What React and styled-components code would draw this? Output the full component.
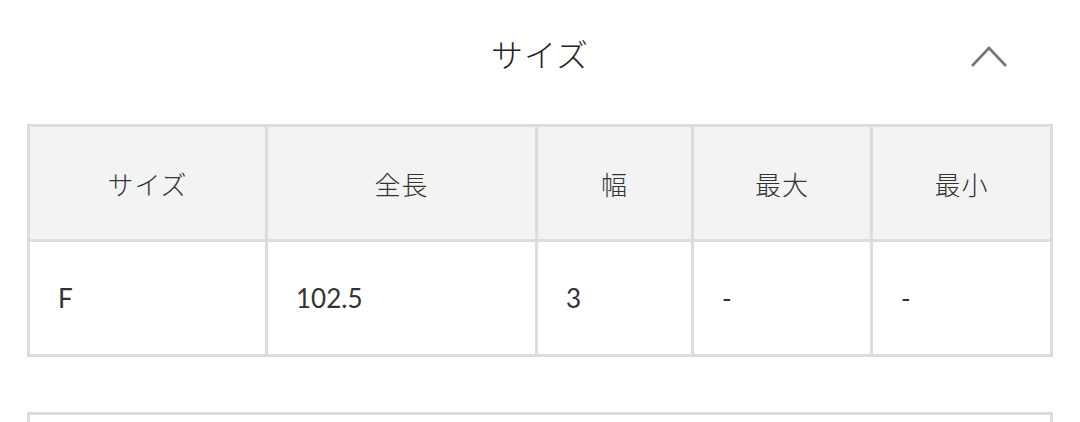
import styled, { createGlobalStyle } from "styled-components";

const GlobalStyle = createGlobalStyle`
    body {
        margin: 0;
        background: #fff;
        font-family: Lato, "Noto Sans CJK JP", sans-serif;
        color: #333;
    }
`;

const columns = [
    { label: "サイズ", width: 238 },
    { label: "全長", width: 270 },
    { label: "幅", width: 156 },
    { label: "最大", width: 179 },
    { label: "最小", width: 180 },
];

const rows = [["F", "102.5", "3", "-", "-"]];

const App = () => {
    return (
        <>
            <GlobalStyle />
            <Page>
                <Header>
                    <span />
                    <Title>サイズ</Title>
                    <Toggle aria-label="閉じる">
                        <svg width="38" height="24" viewBox="0 0 38 24">
                            <polyline
                                points="2,21 19,3 36,21"
                                fill="none"
                                stroke="#777"
                                strokeWidth="2.6"
                            />
                        </svg>
                    </Toggle>
                </Header>
                <Table>
                    <colgroup>
                        {columns.map((c) => (
                            <col key={c.label} style={{ width: c.width }} />
                        ))}
                    </colgroup>
                    <thead>
                        <tr>
                            {columns.map((c) => (
                                <HeadCell key={c.label}>{c.label}</HeadCell>
                            ))}
                        </tr>
                    </thead>
                    <tbody>
                        {rows.map((r, i) => (
                            <tr key={i}>
                                {r.map((v, j) => (
                                    <Cell key={j}>{v}</Cell>
                                ))}
                            </tr>
                        ))}
                    </tbody>
                </Table>
                <NextBox />
            </Page>
        </>
    );
};

export default App;

const Page = styled.div`
    width: 1026px;
    padding: 0 27px;
    height: 422px;
    overflow: hidden;
`;

const Header = styled.div`
    display: grid;
    grid-template-columns: 1fr auto 1fr;
    align-items: center;
    height: 106px;
    margin-bottom: 18px;
`;

const Title = styled.h2`
    margin: 0;
    font-family: "Noto Sans CJK JP", sans-serif;
    font-size: 32px;
    font-weight: 300;
    color: #222;
    letter-spacing: 1px;
`;

const Toggle = styled.button`
    justify-self: end;
    margin: 8px 45px 0 0;
    padding: 0;
    border: 0;
    background: none;
    display: flex;
`;

const Table = styled.table`
    width: 1026px;
    table-layout: fixed;
    border-collapse: separate;
    border-spacing: 0;
    border-top: 3px solid #dcdcdc;
    border-left: 3px solid #dcdcdc;
`;

const HeadCell = styled.th`
    height: 112px;
    padding: 0;
    background: #f3f3f3;
    border-right: 3px solid #dcdcdc;
    border-bottom: 3px solid #dcdcdc;
    font-family: "Noto Sans CJK JP", sans-serif;
    font-size: 26px;
    font-weight: 300;
    color: #333;
    text-align: center;
    letter-spacing: 1px;
`;

const Cell = styled.td`
    height: 112px;
    padding: 0 0 0 28px;
    border-right: 3px solid #dcdcdc;
    border-bottom: 3px solid #dcdcdc;
    font-family: Lato, "Noto Sans CJK JP", sans-serif;
    font-size: 26px;
    color: #333;
`;

const NextBox = styled.div`
    margin-top: 55px;
    height: 40px;
    border: 3px solid #dcdcdc;
    border-bottom: 0;
    background: #fff;
`;
